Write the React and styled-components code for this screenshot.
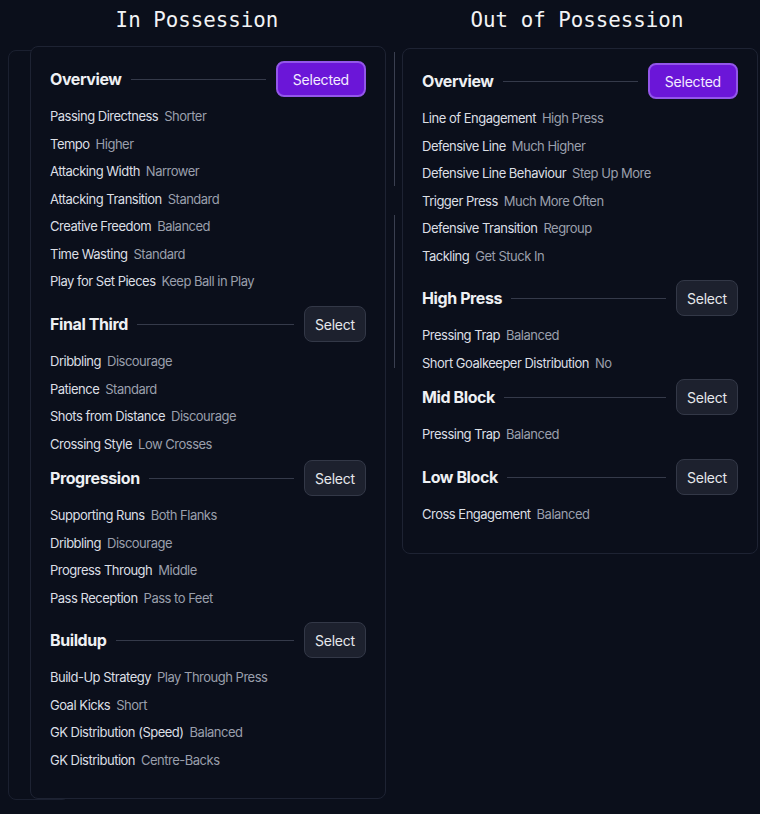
import React from 'react'
import styled, { createGlobalStyle } from 'styled-components'

const GlobalStyle = createGlobalStyle`
  html, body {
    margin: 0;
    padding: 0;
    background: #0b0f1b;
  }
  body {
    font-family: "Inter", "Roboto", sans-serif;
    color: #e4e6eb;
  }
`

const Page = styled.div`
  display: flex;
  gap: 8px;
  padding-left: 8px;
  width: 760px;
  height: 814px;
  box-sizing: border-box;
  overflow: hidden;
`

const Column = styled.div`
  width: ${(p) => p.width}px;
  flex-shrink: 0;
  display: flex;
  flex-direction: column;
`

const Title = styled.h2`
  margin: 0;
  height: 41px;
  line-height: 41px;
  text-align: center;
  font-family: "DejaVu Sans Mono", "Liberation Mono", monospace;
  font-weight: 400;
  font-size: 20.8px;
  color: #f2f3f5;
`

const Stack = styled.div`
  display: grid;
  margin-top: 5px;
  & > * {
    grid-area: 1 / 1;
  }
`

const Ghost = styled.div`
  margin-top: 4px;
  margin-bottom: -1px;
  width: 60px;
  border: 1px solid #1b2030;
  border-radius: 8px;
`

const Split = styled.div`
  display: grid;
  grid-template-columns: 1px 1fr;
  column-gap: 7px;
  align-items: start;
  margin-top: ${(p) => p.offset}px;
`

const Rail = styled.div`
  display: flex;
  flex-direction: column;
  gap: 29px;
  margin-top: 4px;
`

const Thumb = styled.div`
  width: 1px;
  height: ${(p) => p.h}px;
  background: #3a3f50;
`

const Card = styled.div`
  position: relative;
  margin-left: ${(p) => p.indent || 0}px;
  width: 356px;
  box-sizing: border-box;
  padding: 14px 19px 24px 19px;
  border: 1px solid #1e2333;
  border-radius: 8px;
  background: #0b0f1b;
`

const Section = styled.section`
  margin-bottom: ${(p) => p.after}px;
  &:last-child {
    margin-bottom: 0;
  }
`

const Header = styled.div`
  display: flex;
  align-items: center;
  height: 36px;
`

const Heading = styled.h3`
  margin: 0;
  font-size: 16px;
  font-weight: 700;
  letter-spacing: -0.4px;
  color: #eef0f3;
  white-space: nowrap;
`

const Line = styled.div`
  flex: 1;
  height: 1px;
  margin: 0 10px 0 9px;
  background: #353a4a;
`

const Button = styled.button`
  height: 36px;
  box-sizing: border-box;
  padding: 0 ${(p) => (p.active ? 15 : 10)}px;
  border-radius: 8px;
  font-family: "Inter", sans-serif;
  font-size: 14px;
  letter-spacing: -0.2px;
  cursor: pointer;
  color: ${(p) => (p.active ? '#f3ecff' : '#e6e8ec')};
  background: ${(p) => (p.active ? '#6b16d8' : '#1d212e')};
  border: ${(p) => (p.active ? '2px solid #9356ea' : '1px solid #333847')};
`

const Rows = styled.ul`
  list-style: none;
  margin: 6px 0 0;
  padding: 0;
`

const Row = styled.li`
  height: 27.5px;
  line-height: 27.5px;
  font-size: 13px;
  letter-spacing: -0.5px;
  white-space: nowrap;
`

const Label = styled.span`
  color: #dcdfe5;
  margin-right: 6px;
`

const Value = styled.span`
  color: #9a9fac;
`

const inPossession = [
  {
    name: 'Overview',
    active: true,
    after: 10.5,
    rows: [
      ['Passing Directness', 'Shorter'],
      ['Tempo', 'Higher'],
      ['Attacking Width', 'Narrower'],
      ['Attacking Transition', 'Standard'],
      ['Creative Freedom', 'Balanced'],
      ['Time Wasting', 'Standard'],
      ['Play for Set Pieces', 'Keep Ball in Play'],
    ],
  },
  {
    name: 'Final Third',
    after: 2,
    rows: [
      ['Dribbling', 'Discourage'],
      ['Patience', 'Standard'],
      ['Shots from Distance', 'Discourage'],
      ['Crossing Style', 'Low Crosses'],
    ],
  },
  {
    name: 'Progression',
    after: 10,
    rows: [
      ['Supporting Runs', 'Both Flanks'],
      ['Dribbling', 'Discourage'],
      ['Progress Through', 'Middle'],
      ['Pass Reception', 'Pass to Feet'],
    ],
  },
  {
    name: 'Buildup',
    after: 0,
    rows: [
      ['Build-Up Strategy', 'Play Through Press'],
      ['Goal Kicks', 'Short'],
      ['GK Distribution (Speed)', 'Balanced'],
      ['GK Distribution', 'Centre-Backs'],
    ],
  },
]

const outOfPossession = [
  {
    name: 'Overview',
    active: true,
    after: 10,
    rows: [
      ['Line of Engagement', 'High Press'],
      ['Defensive Line', 'Much Higher'],
      ['Defensive Line Behaviour', 'Step Up More'],
      ['Trigger Press', 'Much More Often'],
      ['Defensive Transition', 'Regroup'],
      ['Tackling', 'Get Stuck In'],
    ],
  },
  {
    name: 'High Press',
    after: 2,
    rows: [
      ['Pressing Trap', 'Balanced'],
      ['Short Goalkeeper Distribution', 'No'],
    ],
  },
  {
    name: 'Mid Block',
    after: 10.5,
    rows: [['Pressing Trap', 'Balanced']],
  },
  {
    name: 'Low Block',
    after: 0,
    rows: [['Cross Engagement', 'Balanced']],
  },
]

const Tactics = ({ sections, indent }) => (
  <Card indent={indent}>
    {sections.map((s) => (
      <Section key={s.name} after={s.after}>
        <Header>
          <Heading>{s.name}</Heading>
          <Line />
          <Button active={s.active}>{s.active ? 'Selected' : 'Select'}</Button>
        </Header>
        <Rows>
          {s.rows.map(([label, value]) => (
            <Row key={label}>
              <Label>{label}</Label>
              <Value>{value}</Value>
            </Row>
          ))}
        </Rows>
      </Section>
    ))}
  </Card>
)

const App = () => {
  return (
    <>
      <GlobalStyle />
      <Page>
        <Column width={378}>
          <Title>In Possession</Title>
          <Stack>
            <Ghost />
            <Tactics sections={inPossession} indent={22} />
          </Stack>
        </Column>
        <Column width={366}>
          <Title>Out of Possession</Title>
          <Split offset={7}>
            <Rail>
              <Thumb h={134} />
              <Thumb h={153} />
            </Rail>
            <Tactics sections={outOfPossession} />
          </Split>
        </Column>
      </Page>
    </>
  )
}

export default App
